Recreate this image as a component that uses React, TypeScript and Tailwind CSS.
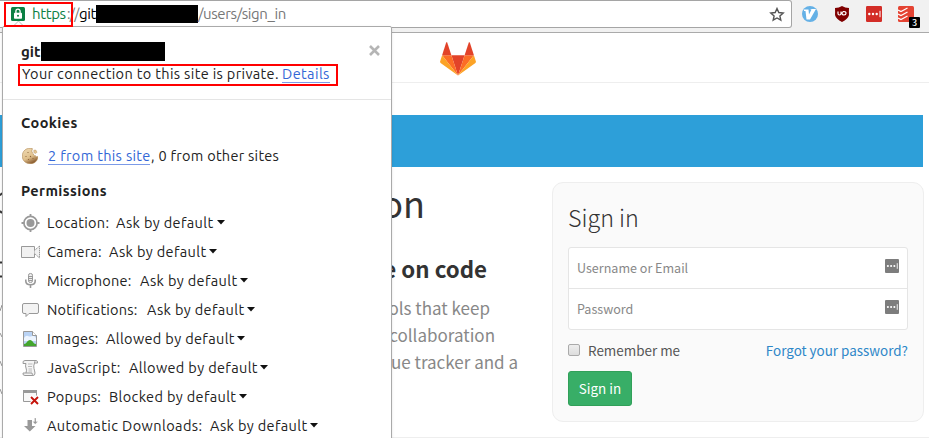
import React from "react";

const ubuntu = "font-['Ubuntu','Noto_Sans',sans-serif]";
const source = "font-['Source_Sans_Pro','Noto_Sans_CJK_SC',sans-serif]";

function Lock() {
  return (
    <svg width="14" height="14" viewBox="0 0 14 14">
      <rect width="14" height="14" rx="1.5" fill="#0b8043" />
      <path d="M4.900 6V4.300a2.100 2.100 0 0 1 4.200 0V6" fill="none" stroke="#fff" strokeWidth="1.300" />
      <rect x="3" y="5.800" width="8" height="6" rx=".8" fill="#fff" />
      <circle cx="7" cy="8.800" r="1" fill="#0b8043" />
    </svg>
  );
}

function Tanuki() {
  return (
    <svg width="36" height="34" viewBox="0 0 36 34">
      <path d="M18 33.5 11.4 13.2h13.2z" fill="#e24329" />
      <path d="M18 33.5 11.4 13.2H2.1z" fill="#fc6d26" />
      <path d="M2.1 13.2.1 19.4c-.2.6 0 1.2.5 1.5L18 33.5z" fill="#fca326" />
      <path d="M2.1 13.2h9.3L7.3.8C7.1.2 6.3.2 6.1.8z" fill="#e24329" />
      <path d="M18 33.5 24.6 13.2h9.3z" fill="#fc6d26" />
      <path d="m33.9 13.2 2 6.2c.2.6 0 1.2-.5 1.5L18 33.5z" fill="#fca326" />
      <path d="M33.9 13.2h-9.3L28.7.8c.2-.6 1-.6 1.2 0z" fill="#e24329" />
    </svg>
  );
}

function PassIcon({ color }: { color: string }) {
  return (
    <svg width="16" height="16" viewBox="0 0 16 16" className="block size-full">
      <rect width="16" height="16" rx="1.2" fill={color} />
      <circle cx="3.3" cy="8" r="1.2" fill="#fff" />
      <circle cx="7" cy="8" r="1.2" fill="#fff" />
      <circle cx="10.7" cy="8" r="1.2" fill="#fff" />
      <path d="M14 4.8v6.4" stroke="#fff" strokeWidth="1" />
    </svg>
  );
}

function Cookie() {
  return (
    <svg width="16" height="16" viewBox="0 0 16 16">
      <defs>
        <linearGradient id="ck" x1="0" y1="0" x2="0.5" y2="1">
          <stop offset="0" stopColor="#f0dcb6" />
          <stop offset=".65" stopColor="#e0c08c" />
          <stop offset="1" stopColor="#8f6236" />
        </linearGradient>
      </defs>
      <path d="M10.500.7C4.500-1 .2 3 .3 8.200c.1 4.600 3.700 7.500 8 7.500s7.600-3 7.500-7.200c-1 .7-2 .2-2.300-.8-1.200.3-2.300-.4-1.900-1.700-1.800-1-2.300-3.300-1.100-5.300z" fill="url(#ck)" stroke="#b08850" strokeWidth=".6" />
      <path d="m11.800 2.200 2-.2 1.200 2.200-1.400 1.400-1.800-1z" fill="#e3c795" stroke="#b08850" strokeWidth=".4" />
      <g fill="#8a6236">
        <circle cx="6" cy="4.500" r=".6" /><circle cx="4" cy="8.500" r=".6" />
        <circle cx="8.500" cy="8.500" r=".7" /><circle cx="6.500" cy="11.500" r=".6" /><circle cx="11" cy="10.500" r=".6" />
      </g>
    </svg>
  );
}

function Icon({ kind }: { kind: string }) {
  return (
    <svg width="20" height="18" viewBox="0 0 20 18" className="block">
      {kind === "location" && (
        <g fill="none" stroke="#999">
          <circle cx="9.500" cy="9" r="6.600" strokeWidth="1.700" />
          <circle cx="9.500" cy="9" r="4" fill="#999" stroke="none" />
          <path d="M9.500 0v3M9.500 15v3M.5 9h3M15.500 9h3" strokeWidth="1.800" />
        </g>
      )}
      {kind === "camera" && (
        <g fill="#f1f1f1" stroke="#999">
          <path d="M.5 3.500h13v11H.5z" />
          <path d="M13.500 7.500 18.500 3v12l-5-4.500" strokeDasharray="1.500 .6" />
        </g>
      )}
      {kind === "mic" && (
        <g fill="none" stroke="#999">
          <rect x="7.500" y="1.500" width="4" height="9" rx="1.800" fill="#eee" />
          <path d="M7.500 4.500h4M7.500 6.500h4M7.500 8.500h4" />
          <path d="M4.800 7.500V9c0 5 9.400 5 9.400 0V7.500M9.500 13v3" strokeWidth="1.600" />
        </g>
      )}
      {kind === "chat" && (
        <path d="M3 2.500h13q1.500 0 1.500 1.500v7q0 1.500-1.500 1.500H8L5 15.500v-3H3Q1.500 12.500 1.500 11V4Q1.500 2.500 3 2.500z" fill="#f3f3f3" stroke="#999" />
      )}
      {kind === "image" && (
        <g>
          <path d="M2.500 1.500h9l4 4v11h-13z" fill="#b9d3f5" stroke="#999" />
          <path d="M3 8q2-3 4-2t4 0 4 2v3H3z" fill="#edf5ff" />
          <path d="M3 14c3 0 3-4 6-4s3 4 6 4v2H3z" fill="#44a52d" />
          <path d="M11.500 1.500v4h4" fill="#fff" stroke="#999" />
        </g>
      )}
      {kind === "script" && (
        <g fill="#f4f4f4" stroke="#999">
          <path d="M4 1.500h11q2 .3 1.500 2.500h-3q-1.200 3-.5 5.500t1 4.500q0 2.500-2 2.500H4q-2.500 0-2-2.500h3q1-3 0-5t0-4.500H2q-.5-3 2-3z" />
          <path d="M13.500 4q0-1.500 1-2.300M5 14h6q0 1.500 1 2.300" />
          <path d="M7 5h4.500M7 7.500h4M7.500 10H11M7.500 12H11" stroke="#bbb" />
        </g>
      )}
      {kind === "popup" && (
        <g>
          <path d="M2.500 2.500h13v11h-13z" fill="#f8f8f8" stroke="#999" />
          <path d="M2 2h14v3H2z" fill="#999" />
          <path d="m9.500 8.500 8 8m0-8-8 8" stroke="#fff" strokeWidth="4" />
          <path d="m10 9 7 7m0-7-7 7" stroke="#c5130b" strokeWidth="1.900" />
        </g>
      )}
      {kind === "download" && (
        <g fill="#999">
          <path d="M6.500 3h4.500v6h3.500l-5.700 5.500L3 9h3.500z" />
          <path d="M13.500 1h1.500v3.500h2l-2.800 2.800-2.700-2.800h2z" stroke="#fff" strokeWidth=".3" />
        </g>
      )}
    </svg>
  );
}

const permissions = [
  { icon: "location", label: "Location:", lw: "w-[69px] tracking-[0.3px]", value: "Ask by default", vw: "w-[101px]" },
  { icon: "camera", label: "Camera:", lw: "w-[62px] tracking-[0.2px]", value: "Ask by default", vw: "w-[100px]" },
  { icon: "mic", label: "Microphone:", lw: "w-[93px] tracking-[0.25px]", value: "Ask by default", vw: "w-[100px]" },
  { icon: "chat", label: "Notifications:", lw: "w-[100px] tracking-[0.2px]", value: "Ask by default", vw: "w-[100px]" },
  { icon: "image", label: "Images:", lw: "w-[59px] tracking-[0.25px]", value: "Allowed by default", vw: "w-[131px]" },
  { icon: "script", label: "JavaScript:", lw: "w-[82px] tracking-[0.3px]", value: "Allowed by default", vw: "w-[131px]" },
  { icon: "popup", label: "Popups:", lw: "w-[62px] tracking-[0.3px]", value: "Blocked by default", vw: "w-[130px]" },
  { icon: "download", label: "Automatic Downloads:", lw: "w-[163px] tracking-[0.4px]", value: "Ask by default", vw: "w-[100px]" },
];

function SitePanel() {
  return (
    <section className={`absolute left-[2px] top-[26px] h-[430px] w-[390px] rounded-t-[2px] border border-[#aaa] bg-white text-[14.5px] text-[#222] shadow-sm ${ubuntu}`}>
      <header className="relative h-[73px] border-b border-[#e5e5e5]">
        <div className="flex h-[34px] items-end pl-[18px]">
          <b className="w-5 text-[15px] leading-[19px]">git</b>
          <span className="h-[19px] w-[124px] bg-black" />
        </div>
        <p className="flex h-[26px] items-center whitespace-nowrap pl-[19px] leading-[26px]">
          <span className="w-[260px] tracking-[0.35px]">Your connection to this site is private.</span>
          <a className="border-b border-[#7c9be8] leading-[17px] tracking-[0.4px] text-[#3367d6]">Details</a>
        </p>
        <div className="absolute left-[15px] top-[37px] h-[22px] w-[320px] border-2 border-[#f00]" />
        <svg className="absolute right-[11px] top-[18px]" width="11" height="11" viewBox="0 0 11 11"><path d="m1 1 9 9m0-9-9 9" stroke="#b5b5b5" strokeWidth="2.600" /></svg>
      </header>
      <h2 className="mt-3 pl-[18px] font-bold leading-[22px] tracking-[0.4px]">Cookies</h2>
      <div className="mt-[10px] flex h-6 items-center whitespace-nowrap pl-[19px]">
        <Cookie />
        <a className="ml-[10px] w-[102px] border-b border-[#7c9be8] leading-[17px] tracking-[0.33px] text-[#3367d6]">2 from this site</a>
        <span className="ml-px tracking-[0.27px]">, 0 from other sites</span>
      </div>
      <h2 className="mt-3 pl-[18px] font-bold leading-[22px] tracking-[0.4px]">Permissions</h2>
      <ul className="mt-[6px]">
        {permissions.map((p) => (
          <li key={p.label} className="flex h-[29px] items-center whitespace-nowrap pl-[18px]">
            <span className="w-[26px]"><Icon kind={p.icon} /></span>
            <span className={p.lw}>{p.label}</span>
            <span className={`tracking-[0.35px] ${p.vw}`}>{p.value}</span>
            <svg width="8" height="5" viewBox="0 0 8 5"><path d="M0 0h8L4 4.500z" fill="#111" /></svg>
          </li>
        ))}
      </ul>
    </section>
  );
}

export default function App() {
  return (
    <div className={`relative h-[438px] w-[929px] overflow-hidden bg-white ${source}`}>
      <div className="flex h-[33px] border-b border-[#aaa] bg-[#f1f1f1]">
        <div className={`relative flex h-7 w-[792px] items-center rounded-r-[3px] border border-l-0 border-[#a5a5a5] bg-white pl-[11px] text-[15px] tracking-[-0.4px] text-[#777] ${ubuntu}`}>
          <Lock />
          <svg className="absolute left-[13px] top-[19px]" width="11" height="6" viewBox="0 0 11 6"><path d="m.5 6 5-5 5 5" fill="#fff" stroke="#bbb" /></svg>
          <span className="ml-[7px] w-[35px] text-[#0b8043]">https</span>
          <span className="w-[12px] text-[14px] tracking-[-0.7px]">://</span>
          <span className="w-[17px] text-black">git</span>
          <span className="h-[18px] w-[102px] bg-black" />
          <span className="tracking-[-0.4px]">/users/sign_in</span>
          <svg className="absolute left-[769px] top-[6px]" width="16" height="15" viewBox="0 0 16 15"><path d="m8 1.500 1.800 4 4.400.5-3.300 2.900.9 4.300L8 11l-3.800 2.200.9-4.300L1.800 6l4.400-.5z" fill="none" stroke="#555" strokeWidth="1.400" /></svg>
        </div>
        <div className="flex items-start pl-[10px] pt-[6px]">
          <svg width="16" height="16" viewBox="0 0 16 16"><circle cx="8" cy="8" r="8" fill="#65b1e6" /><path d="M2 3.500h4.500l.5 5L9.500 3.500H8.500V3H14L8 13.500H4.500L3.500 5H2z" fill="#fff" /></svg>
          <svg className="ml-4" width="16" height="16" viewBox="0 0 16 16"><path d="M8 0q3 2 7 2-.2 5 0 7-1 4-7 7-6-3-7-7 .2-2 0-7 4 0 7-2z" fill="#800000" /><path d="M4 5.500v2q0 1.500 1.500 1.500T7 7.500v-2m2 0H10q2 0 2 1.700T10 9q-2 0-2-1.700t2-1.800" fill="none" stroke="#fff" strokeWidth="1.200" /></svg>
          <span className="ml-4 size-4"><PassIcon color="#d32d27" /></span>
          <span className="relative ml-4 size-4">
            <svg width="16" height="16" viewBox="0 0 16 16"><rect width="16" height="16" rx="1.500" fill="#e44332" /><path d="m0 4 3 1.500L9.500 2M0 8l3 1.500L9.500 6M0 12l3 1.500L9.500 10" fill="none" stroke="#fff" strokeWidth="1.200" /></svg>
            <b className="absolute left-[11px] top-[11px] h-[11px] w-[11px] rounded-[1px] bg-black text-center text-[9px] font-medium leading-[11px] text-white">3</b>
          </span>
        </div>
      </div>
      <header className="flex h-[50px] border-b border-[#eee] pl-[440px] pt-[9px]"><Tanuki /></header>
      <div className="mt-8 h-[52px] w-[923px] bg-[#2d9fd9]" />
      <main className="flex">
        <svg className="shrink-0" width="2" height="260" viewBox="0 0 2 260">
          <path d="M0 28.500 2 26M0 44l2 2M0 95.500h2M0 109.500h2" stroke="#333" strokeWidth="2" />
          <path d="m0 144 2-6M0 166l2 4M0 194l2 5M0 222l2 5" stroke="#999" />
        </svg>
        <article className="flex w-[550px] flex-col whitespace-nowrap text-[#333]">
          <h1 className="mt-[11px] w-[423px] text-right text-[36px] leading-[48px]">on</h1>
          <h2 className="mt-[24px] w-[485px] text-right text-[22.300px] font-bold leading-[36px]">e on code</h2>
          <div className="mt-[8px] text-right text-[17px] leading-[27px] text-[#888]">
            <p className="w-[488px]">rols that keep</p>
            <p className="w-[493px]">collaboration</p>
            <p className="w-[516px]">sue tracker and a</p>
          </div>
        </article>
        <form className="mt-[15px] h-[240px] w-[372px] rounded-[11px] border border-[#eee] bg-[#fafafa] px-[15px] pt-[16px]">
          <h3 className="text-[23.300px] font-light leading-[36px] text-[#333]">Sign in</h3>
          <div className="mt-[12px] rounded-[3px] border border-[#e5e5e5] bg-white text-[12.550px] text-[#888]">
            <div className="flex h-[41px] items-center justify-between border-b border-[#e5e5e5] pl-2 pr-2"><span>Username or Email</span><span className="mb-[5px] size-[14px]"><PassIcon color="#7d7d7d" /></span></div>
            <div className="flex h-10 items-center justify-between pl-2 pr-2"><span>Password</span><span className="mb-[5px] size-[14px]"><PassIcon color="#7d7d7d" /></span></div>
          </div>
          <div className="mt-[9px] flex h-[22px] items-center text-[13.450px] text-[#555]">
            <span className="size-3 rounded-[2px] border border-[#aaa] bg-linear-to-b from-[#eee] to-[#ddd]" />
            <span className="ml-2">Remember me</span>
            <a className="ml-auto text-[#2e87c8]">Forgot your password?</a>
          </div>
          <button type="button" className="mt-[10px] block h-[35px] w-16 rounded-[3px] border border-[#31a059] bg-[#38ae67] text-[13.450px] text-white">Sign in</button>
        </form>
      </main>
      <div className="absolute bottom-0 left-0 h-px w-full bg-[#eee]" />
      <SitePanel />
      <div className="absolute left-[4px] top-[2px] h-[25px] w-[69px] border-2 border-[#f00]" />
    </div>
  );
}
